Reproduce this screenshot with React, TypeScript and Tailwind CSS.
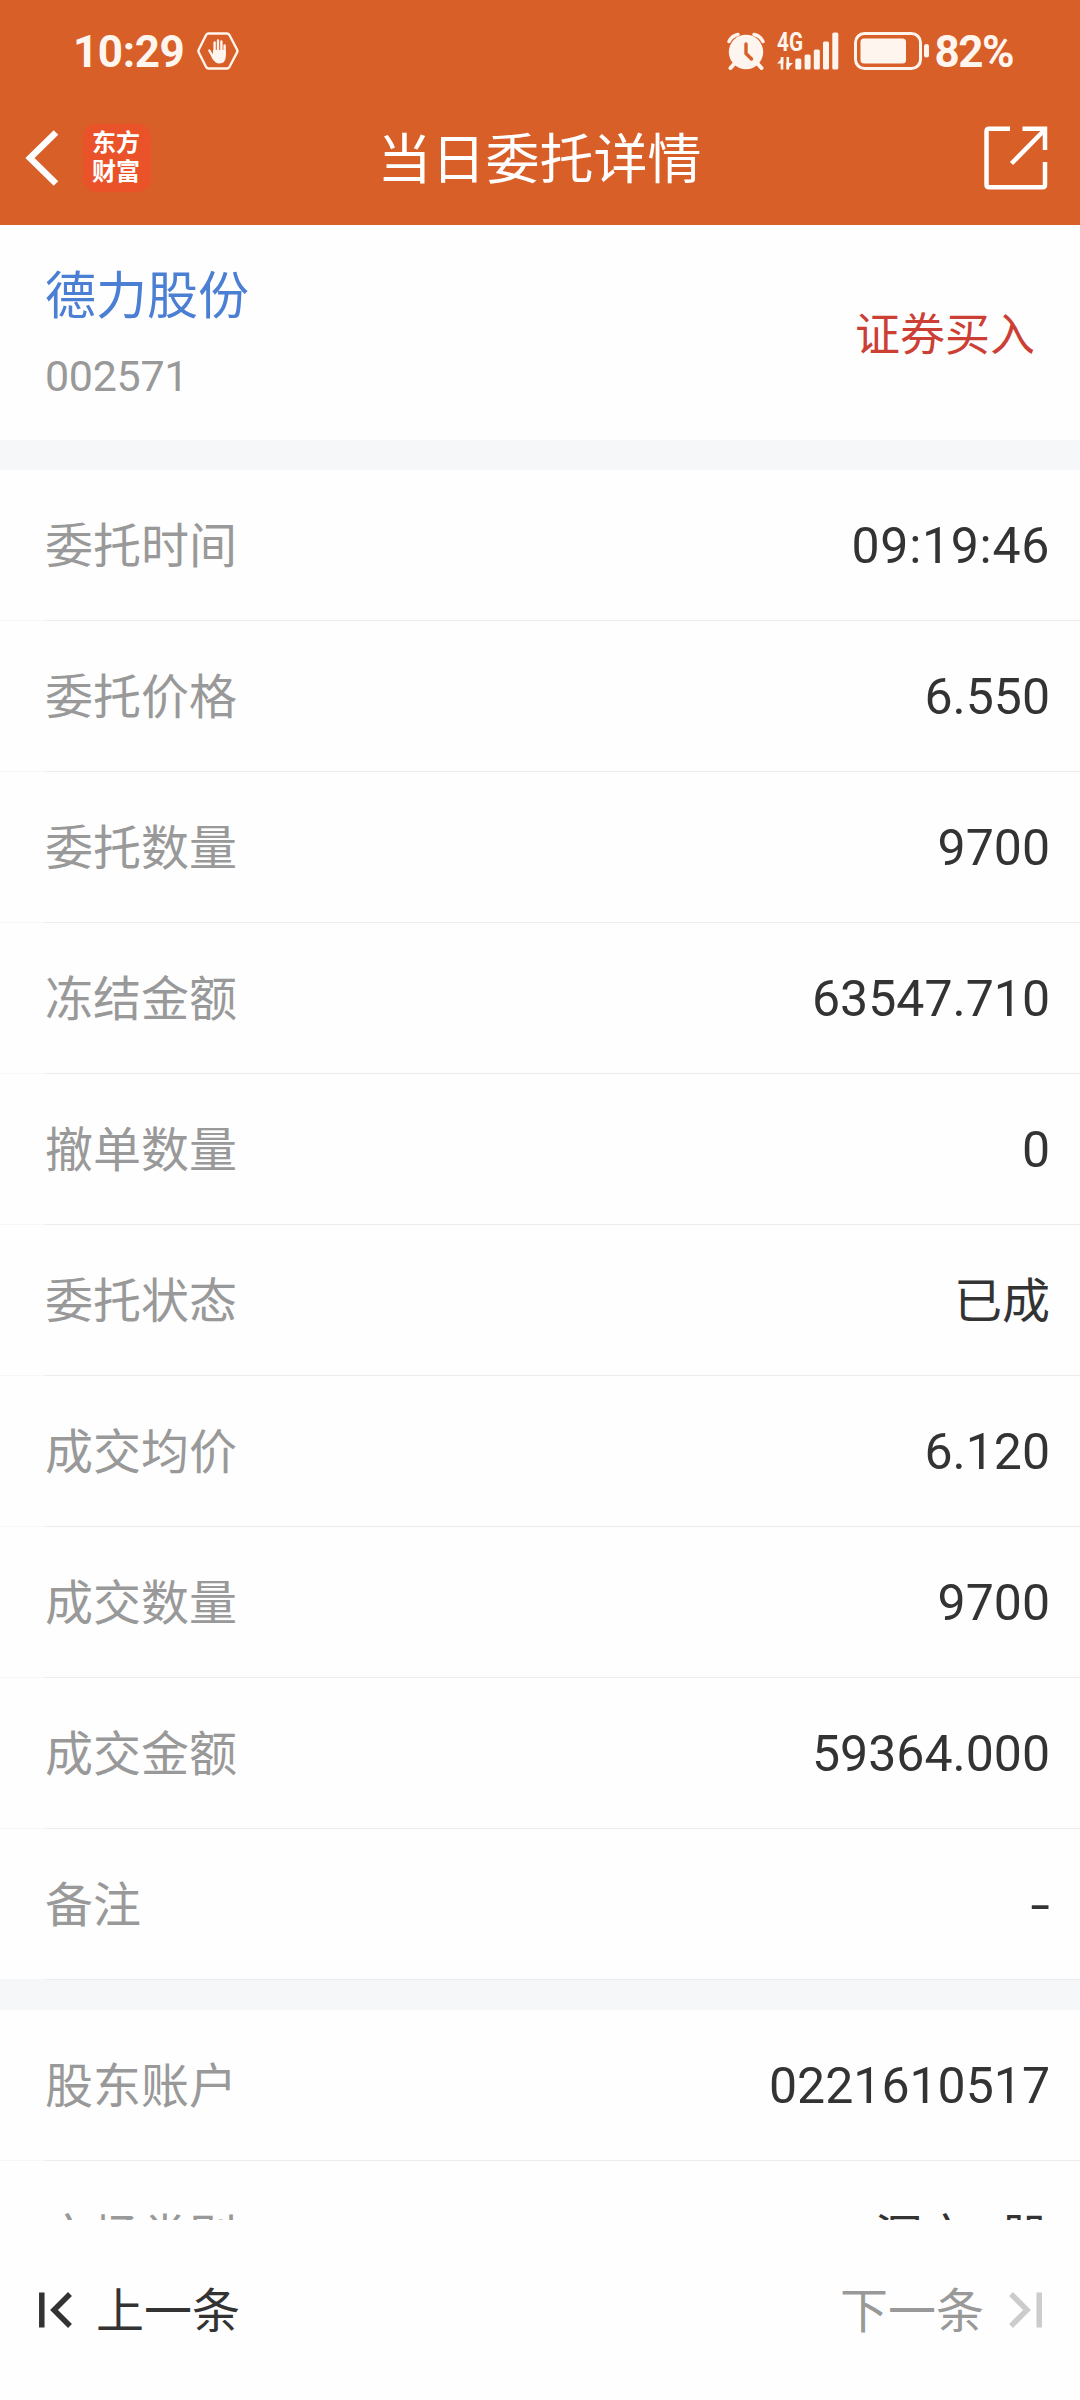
import React from 'react';
import clsx from 'clsx';

interface DetailItem {
  label: string;
  value: string;
}

const orderItems: DetailItem[] = [
  { label: '委托时间', value: '09:19:46' },
  { label: '委托价格', value: '6.550' },
  { label: '委托数量', value: '9700' },
  { label: '冻结金额', value: '63547.710' },
  { label: '撤单数量', value: '0' },
  { label: '委托状态', value: '已成' },
  { label: '成交均价', value: '6.120' },
  { label: '成交数量', value: '9700' },
  { label: '成交金额', value: '59364.000' },
  { label: '备注', value: '-' },
];

const accountItems: DetailItem[] = [
  { label: '股东账户', value: '0221610517' },
  { label: '市场类别', value: '深市A股' },
];

const StatusBar: React.FC = () => (
  <div className="flex h-[102px] items-center justify-between pl-[73px] pr-[67px] text-[#fff5ef]">
    <div className="flex items-center">
      <span className="w-[124px] pt-[2px] text-[44px] leading-none font-bold tracking-[-0.4px]">10:29</span>
      <svg width="42" height="38" viewBox="0 0 42 38" fill="none">
        <path d="M11.5 1.5h18.5q1.5 0 2.300 1.300L40 17.500q.8 1.500 0 3L32.300 35.200q-.8 1.300-2.300 1.300H11.500q-1.500 0-2.300-1.300L1.800 20.500q-.8-1.500 0-3L9.200 2.800q.8-1.300 2.300-1.300z" stroke="currentColor" strokeWidth="2.4" />
        <path d="M12.300 18.500l4.500 8M17.600 10.500V20M21 8.500V20M24.400 9.500V20M27.600 13.500v9" stroke="currentColor" strokeWidth="2.400" strokeLinecap="round" />
        <path d="M16.400 18h12.400v6q0 7.500-6.500 7.500-4.500 0-7.500-6z" fill="currentColor" />
      </svg>
    </div>

    <div className="flex items-center">
      {/* Alarm */}
      <svg width="38" height="38" viewBox="0 0 38 38" fill="none">
        <circle cx="19" cy="20" r="17.200" fill="currentColor" />
        <path d="M2 9.500Q5 3.500 11 2.500M36 9.500Q33 3.500 27 2.500" stroke="currentColor" strokeWidth="3.400" strokeLinecap="round" />
        <path d="M8 31l-4.500 5M30 31l4.500 5" stroke="currentColor" strokeWidth="4" strokeLinecap="round" />
        <path d="M19 12v9.500l5.500 5.500" stroke="#d85f27" strokeWidth="3.400" strokeLinecap="round" />
      </svg>
      {/* Network type and signal */}
      <svg className="ml-[12px] overflow-visible" width="62" height="38" viewBox="0 0 62 38">
        <text x="0" y="18.500" fontSize="25" fontWeight="700" textLength="26" lengthAdjust="spacingAndGlyphs" fill="currentColor">4G</text>
        <path d="M5 25v12.500M10.800 25v12.500" stroke="currentColor" strokeWidth="2.600" />
        <path d="M0 31.500L6.300 25v6.500zM16 31L9.500 37.500V31z" fill="currentColor" />
        <rect x="18.300" y="26.500" width="6" height="11" rx="1.500" fill="currentColor" />
        <rect x="27.600" y="22.500" width="6" height="15" rx="1.500" fill="currentColor" />
        <rect x="36.800" y="17.500" width="6" height="20" rx="1.500" fill="currentColor" />
        <rect x="46" y="9.500" width="6" height="28" rx="1.500" fill="currentColor" />
        <rect x="55.300" y="0.500" width="6" height="37" rx="1.500" fill="currentColor" />
      </svg>
      {/* Battery */}
      <svg className="ml-[15px]" width="76" height="38" viewBox="0 0 76 38" fill="none">
        <rect x="1.500" y="1.500" width="65" height="35" rx="9" stroke="currentColor" strokeWidth="3" />
        <rect x="6.500" y="6.500" width="45.500" height="25" rx="3.500" fill="currentColor" />
        <rect x="70" y="12" width="5" height="13.500" rx="2.500" fill="currentColor" />
      </svg>
      <span className="ml-[4px] pt-[2px] text-[44px] leading-none font-bold tracking-[-1.5px]">82%</span>
    </div>
  </div>
);

const TitleBar: React.FC = () => (
  <div className="flex h-[112px] items-center justify-between pl-[25px] pr-[32px] text-white">
    <div className="flex flex-1 items-center">
      <svg width="34" height="56" viewBox="0 0 34 56" fill="none">
        <path d="M31 2.500L5 28l26 25.500" stroke="currentColor" strokeWidth="6.500" />
      </svg>
      <div className="ml-[24px] flex size-[68px] flex-col items-center justify-center rounded-[14px] bg-[#ea5229] pr-[2px] text-[24px] leading-[29px] font-bold">
        <span>东方</span>
        <span>财富</span>
      </div>
    </div>
    <h1 className="pt-[6px] pl-[6px] text-[54px] leading-none font-normal">当日委托详情</h1>
    <div className="flex flex-1 justify-end">
      <svg width="64" height="64" viewBox="0 0 64 64" fill="none" stroke="currentColor" strokeWidth="4.500">
        <path d="M26 2.800H5q-2.500 0-2.500 2.500v53.500q0 2.500 2.500 2.500h53.500q2.500 0 2.500-2.500V36" />
        <path d="M38.500 2.800H61V24M27.500 37.500L60 4.500" />
      </svg>
    </div>
  </div>
);

const isChinese = (value: string) => /[\u4e00-\u9fa5]/.test(value);

const DetailRow: React.FC<DetailItem> = ({ label, value }) => (
  <div className="flex h-[151px] flex-col">
    <div className="flex flex-1 items-center justify-between pl-[45px] pr-[30px]">
      <span className="pt-[4px] text-[48px] leading-none text-[#999999]">{label}</span>
      <span
        className={clsx(
          'leading-none text-[#333333]',
          isChinese(value) ? 'pt-[4px] text-[48px]' : 'pt-[1px] text-[50px]',
          value.includes(':') && 'tracking-[0.7px]',
          value === '-' && 'origin-right scale-x-[1.4]',
        )}
      >
        {value}
      </span>
    </div>
    <div className="flex h-px bg-[#ececec]">
      <div className="w-[45px] bg-[#f7f7f7]" />
    </div>
  </div>
);

const App: React.FC = () => {
  return (
    <div className="flex h-[2400px] w-[1080px] flex-col overflow-hidden bg-[#fefefe] font-[Roboto,'Noto_Sans_CJK_SC',sans-serif]">
      <header className="h-[225px] shrink-0 bg-[#d85f27]">
        <StatusBar />
        <TitleBar />
      </header>

      <main className="h-[1995px] shrink-0 overflow-hidden">
        {/* Stock and trade direction */}
        <section className="flex h-[215px] items-center justify-between pl-[45px] pr-[45px]">
          <div className="pt-[8px]">
            <p className="text-[51px] leading-[60px] text-[#4b7fd3]">德力股份</p>
            <p className="mt-[19px] text-[43px] leading-[60px] tracking-[-0.3px] text-[#999999]">002571</p>
          </div>
          <p className="pt-[5px] text-[45px] leading-none text-[#cc3f35]">证券买入</p>
        </section>
        <div className="h-[30px] bg-[#f6f7f9]" />

        <section>
          {orderItems.map((item) => (
            <DetailRow key={item.label} {...item} />
          ))}
        </section>
        <div className="h-[30px] bg-[#f6f7f9]" />

        <section>
          {accountItems.map((item) => (
            <DetailRow key={item.label} {...item} />
          ))}
        </section>
      </main>

      <footer className="flex h-[180px] shrink-0 items-center justify-between pl-[39px] pr-[38px] text-[48px] leading-none">
        <button className="flex items-center text-[#333333]">
          <svg width="34" height="36" viewBox="0 0 34 36" fill="none" stroke="currentColor" strokeWidth="5.500">
            <path d="M2.800 0.500v35M31 2L15 18l16 16" />
          </svg>
          <span className="ml-[23px] pt-[3px]">上一条</span>
        </button>
        <button className="flex items-center text-[#999999]">
          <span className="mr-[24px] pt-[3px]">下一条</span>
          <svg className="text-[#cccccc]" width="34" height="36" viewBox="0 0 34 36" fill="none" stroke="currentColor" strokeWidth="5.500">
            <path d="M31.200 0.500v35M3 2l16 16L3 34" />
          </svg>
        </button>
      </footer>
    </div>
  );
};

export default App;
